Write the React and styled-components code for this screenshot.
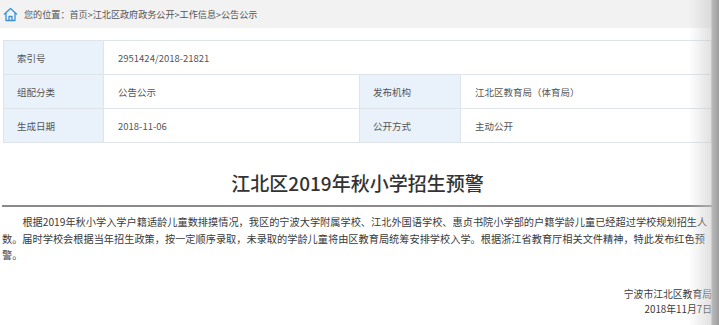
import styled, { createGlobalStyle } from "styled-components";

const GlobalStyle = createGlobalStyle`
	html, body {
		margin: 0;
		padding: 0;
		background: #fff;
	}
	body {
		font-family: "Noto Sans CJK SC", "Noto Sans", sans-serif;
		color: #333;
	}
	body::after {
		content: "";
		position: fixed;
		top: 0;
		right: 0;
		bottom: 0;
		width: 30px;
		pointer-events: none;
		background: linear-gradient(to right, rgba(200, 200, 200, 0) 0, rgba(200, 200, 200, 0.55) 22px, #b9b9b9 23px, #9e9e9e 30px);
	}
`;

const Crumb = styled.div`
	height: 28px;
	display: flex;
	align-items: center;
	gap: 6px;
	padding-left: 3px;
	background: #f2f2f2;
	font-size: 9.1px;
	color: #555;
	svg {
		flex-shrink: 0;
	}
`;

const Page = styled.div`
	padding: 12px 7px 0 3px;
`;

const InfoTable = styled.div`
	display: grid;
	grid-template-columns: 100px 256px 101px 1fr;
	border-top: 1px solid #dfe4ea;
	border-left: 1px solid #dfe4ea;
	font-size: 9.5px;
	color: #555;
`;

const Cell = styled.div`
	height: 33px;
	display: flex;
	align-items: center;
	padding-left: ${(props) => (props.label ? "13px" : "14px")};
	background: ${(props) => (props.label ? "#e9f1fa" : "#fff")};
	border-right: 1px solid #dfe4ea;
	border-bottom: 1px solid #dfe4ea;
	grid-column: ${(props) => (props.wide ? "span 3" : "auto")};
`;

const Title = styled.h1`
	margin: 27px -1px 0;
	padding-bottom: 9px;
	text-align: center;
	font-size: 19px;
	font-weight: 500;
	line-height: 26px;
	color: #333;
	border-bottom: 2px solid #8a8a8a;
`;

const Body = styled.p`
	margin: 7px -2px 0 -1px;
	text-indent: 2em;
	font-size: 10.2px;
	line-height: 16.5px;
	color: #3a3a3a;
`;

const Sign = styled.div`
	margin-top: 23px;
	text-align: right;
	font-size: 9.8px;
	line-height: 15px;
	color: #3a3a3a;
`;

const HomeIcon = () => (
	<svg width="15" height="15" viewBox="0 0 15 15" fill="none" stroke="#3d8fd6" strokeWidth="1.3" strokeLinejoin="round">
		<path d="M1 7.5 L7.5 1.5 L14 7.5" />
		<path d="M3 6 V13.5 H12 V6" />
		<path d="M6 13.5 V9.5 H9 V13.5" />
	</svg>
);

const rows = [
	[{ t: "索引号", label: true }, { t: "2951424/2018-21821", wide: true }],
	[{ t: "组配分类", label: true }, { t: "公告公示" }, { t: "发布机构", label: true }, { t: "江北区教育局（体育局）" }],
	[{ t: "生成日期", label: true }, { t: "2018-11-06" }, { t: "公开方式", label: true }, { t: "主动公开" }],
];

const App = () => {
	return (
		<>
			<GlobalStyle />
			<Crumb>
				<HomeIcon />
				<span>您的位置：首页&gt;江北区政府政务公开&gt;工作信息&gt;公告公示</span>
			</Crumb>
			<Page>
				<InfoTable>
					{rows.flat().map((c, i) => (
						<Cell key={i} label={c.label} wide={c.wide}>{c.t}</Cell>
					))}
				</InfoTable>
				<Title>江北区2019年秋小学招生预警</Title>
				<Body>
					根据2019年秋小学入学户籍适龄儿童数排摸情况，我区的宁波大学附属学校、江北外国语学校、惠贞书院小学部的户籍学龄儿童已经超过学校规划招生人数。届时学校会根据当年招生政策，按一定顺序录取，未录取的学龄儿童将由区教育局统筹安排学校入学。根据浙江省教育厅相关文件精神，特此发布红色预警。
				</Body>
				<Sign>
					<div>宁波市江北区教育局</div>
					<div>2018年11月7日</div>
				</Sign>
			</Page>
		</>
	);
};

export default App;
